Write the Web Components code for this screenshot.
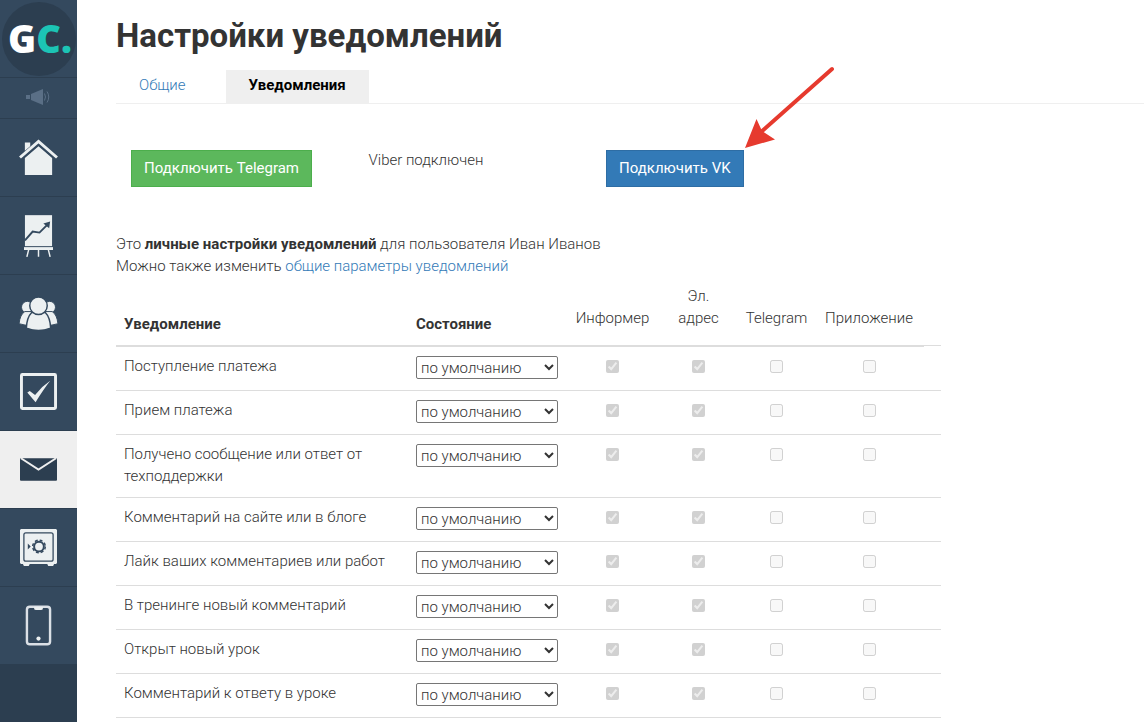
<!DOCTYPE html>
<html lang="ru">
<head>
<meta charset="utf-8">
<meta name="viewport" content="width=device-width, initial-scale=1">
<title>Настройки уведомлений</title>
<style>
  html { --line: #ddd; --link: #337ab7; --font: Roboto, "Noto Sans", sans-serif; }
  body { margin: 0; background: #fff; color: #333; font: 300 15px/22px var(--font); }
</style>
</head>
<body>
<gc-app>
  <gc-sidebar slot="sidebar"></gc-sidebar>
  <gc-page heading="Настройки уведомлений">
    <gc-tabs slot="tabs"></gc-tabs>
    <gc-connections></gc-connections>
    <gc-intro></gc-intro>
    <gc-table></gc-table>
  </gc-page>
</gc-app>

<script>
const define = (name, html, setup) => customElements.define(name, class extends HTMLElement {
  constructor() {
    super();
    const t = document.createElement('template');
    t.innerHTML = html;
    this.attachShadow({ mode: 'open' }).append(t.content.cloneNode(true));
  }
  connectedCallback() { if (setup) setup(this, this.shadowRoot); }
});

define('gc-app', `
  <style>
    :host { display: grid; grid-template-columns: 77px minmax(0, 1fr); min-height: 100vh; }
  </style>
  <slot name="sidebar"></slot><slot></slot>`);

define('gc-nav-item', `
  <style>
    :host { display: block; }
    a { display: flex; align-items: center; justify-content: center; box-sizing: border-box;
        height: 78px; background: #34495e; border-bottom: 1px solid #2c3e50; color: #ecf0f1; }
    :host([small]) a { height: 41px; padding: 0 1px 2px 0; color: #5a6f86; }
    :host([active]) a { background: #efefef; color: #2c3e50; }
  </style>
  <a href="#"><slot></slot></a>`,
  (el, root) => root.querySelector('a').setAttribute('aria-label', el.getAttribute('label')));

define('gc-sidebar', `
  <style>
    :host { display: block; background: #2c3e50; }
    svg { display: block; }
    .logo { display: flex; align-items: center; justify-content: center; box-sizing: border-box;
            width: 74px; height: 74px; padding: 0 0 2px 2px;
            border-radius: 50%; background: #2c3e50; color: #fff; text-decoration: none;
            font: 800 38px/72px "Open Sans", sans-serif; }
    .logo span { color: #1cc4b5; }
    header { display: flex; justify-content: center; align-items: center; height: 77px; padding-left: 1px;
             background: #34495e; border-bottom: 1px solid #2c3e50; }
  </style>
  <header><a class="logo" href="#">G<span>C.</span></a></header>
  <nav>
    <gc-nav-item small label="Объявления">
      <svg width="26" height="18" viewBox="0 0 26 18" fill="currentColor"><rect x="1" y="7" width="4" height="4"/><path d="M6 6 18 1v16L6 12z"/><path d="M19.500 5.500q2 3.500 0 7M22 3.500q3.500 5.500 0 11" fill="none" stroke="currentColor"/></svg>
    </gc-nav-item>
    <gc-nav-item label="Главная">
      <svg width="39" height="37" viewBox="0 0 40 38" fill="currentColor"><path d="M6 19.500 20 7.500l14 12V37H6z"/><path d="M6 3.500h5.500v4L6 12.500z"/><path d="M1 20 20 3.500 39 20" fill="none" stroke="#34495e" stroke-width="5"/><path d="M1 19 20 2.500 39 19" fill="none" stroke="currentColor" stroke-width="3"/></svg>
    </gc-nav-item>
    <gc-nav-item label="Статистика">
      <svg width="31" height="43" viewBox="0 0 32 44" fill="currentColor"><path d="M2 1h28v32H2z"/><path d="m2 27 8-9 7 1 8-8" fill="none" stroke="#34495e" stroke-width="2"/><path d="m21 9.500 7-2-1 7z" fill="#34495e"/><path d="M1 34h30v3H1z"/><path d="m6 36-2 8m12-8v8m10-8 2 8" stroke="currentColor" stroke-width="1.500"/></svg>
    </gc-nav-item>
    <gc-nav-item label="Пользователи">
      <svg width="39" height="35" viewBox="0 0 40 36" fill="currentColor" stroke="#34495e"><circle cx="8.500" cy="11.500" r="6"/><circle cx="31.500" cy="11.500" r="6"/><path d="M6 16h7v14Q6 30.500 0 28.500 1 19 6 16zM34 16h-7v14q7 .5 13-1.500Q39 19 34 16z"/><path d="M13 17h14q5 5 5.500 16Q20 38 7.500 33 8 22 13 17z" stroke-width="1.500"/><circle cx="20" cy="10" r="9" stroke-width="1.500"/></svg>
    </gc-nav-item>
    <gc-nav-item label="Задачи">
      <svg width="37" height="37" viewBox="0 0 38 38"><rect x="1.500" y="1.500" width="35" height="35" rx="1" fill="none" stroke="currentColor" stroke-width="3"/><path d="m7.500 20 2.500-1.500 5.500 4Q22 14 31 8 24 17 16 30z" fill="currentColor"/></svg>
    </gc-nav-item>
    <gc-nav-item active label="Сообщения">
      <svg width="37" height="23" viewBox="0 1 38 23"><rect y="1" width="38" height="23" rx="1" fill="currentColor"/><path d="M1 1 19 12.500 37 1" fill="none" stroke="#efefef" stroke-width="2"/></svg>
    </gc-nav-item>
    <gc-nav-item label="Продажи">
      <svg width="37" height="37" viewBox="0 0 38 38"><path d="M1 0h36l1 1v34l-1 1h-2l-1 2h-5l-1-2H10l-1 2H4l-1-2H1l-1-1V1z" fill="currentColor"/><g fill="none" stroke="#34495e"><rect x="4" y="4" width="30" height="29" rx="2" stroke-width="1.300"/><circle cx="19.500" cy="18" r="5" stroke-width="2"/><circle cx="19.500" cy="18" r="6.500" stroke-width="1.500" stroke-dasharray="3 2.100"/></g><path d="m8 15 3 3-3 3z" fill="#34495e"/></svg>
    </gc-nav-item>
    <gc-nav-item label="Мобильное приложение">
      <svg width="27" height="43" viewBox="0 0 28 43"><rect x="2" y="2" width="24" height="39" rx="3" fill="none" stroke="#dbe0e6" stroke-width="2.500"/><path d="M9.500 2h9v2q0 1.500-2 1.500h-5q-2 0-2-1.500z" fill="#ecf0f1"/><circle cx="14" cy="35" r="2.200" fill="#ecf0f1"/></svg>
    </gc-nav-item>
  </nav>`);

define('gc-page', `
  <style>
    :host { display: block; padding-left: 39px; }
    h1 { margin: 0; padding: 15px 0 13px; font-size: 33px; line-height: 42px; font-weight: 700; }
  </style>
  <h1></h1><slot name="tabs"></slot><slot></slot>`,
  (el, root) => root.querySelector('h1').textContent = el.getAttribute('heading'));

define('gc-tabs', `
  <style>
    :host { display: block; }
    nav { display: flex; gap: 17px; border-bottom: 1px solid #efefef; }
    a { padding: 4px 23px 7px; color: var(--link); text-decoration: none; }
    a[aria-current] { background: #efefef; color: #000; font-weight: 700; }
  </style>
  <nav><a href="#">Общие</a><a href="#" aria-current="page">Уведомления</a></nav>`);

define('gc-button', `
  <style>
    :host { display: inline-block; }
    button { padding: 7px 12px; border: 1px solid #4cae4c; background: #5cb85c; color: #fff;
             font: 400 15px/21px var(--font); white-space: nowrap; display: block; }
    :host([kind="primary"]) button { background: #337ab7; border-color: #2e6da4; }
  </style>
  <button type="button"><slot></slot></button>`);

define('gc-connections', `
  <style>
    :host { display: grid; grid-template-columns: repeat(4, 1fr); max-width: 950px;
            padding: 46px 0; align-items: start; line-height: 20px; }
    div { padding-left: 15px; }
    .target { position: relative; display: inline-block; vertical-align: top; padding: 0; }
    svg { position: absolute; left: 100%; bottom: 100%; }
  </style>
  <div><gc-button>Подключить Telegram</gc-button></div>
  <div>Viber подключен</div>
  <div><div class="target"><gc-button kind="primary">Подключить VK</gc-button>
    <svg width="92" height="86" viewBox="0 0 92 86" aria-hidden="true"><path d="M88 5 17 68" stroke="#e63a2e" stroke-width="4" stroke-linecap="round"/><path d="M1 84 12.500 55 18 67 31 75.500z" fill="#e63a2e"/></svg></div></div>`);

define('gc-intro', `
  <style>
    :host { display: block; }
    p { margin: 0; }
    b { font-weight: 700; }
    a { color: var(--link); text-decoration: none; }
  </style>
  <p>Это <b>личные настройки уведомлений</b> для пользователя Иван Иванов</p>
  <p>Можно также изменить <a href="#">общие параметры уведомлений</a></p>`);

define('gc-table', `
  <style>
    :host { display: block; max-width: 825px; padding-top: 8px; }
    table { width: 100%; table-layout: fixed; border-collapse: separate; border-spacing: 0; }
    .name { width: 292px; } .state { width: 159px; } .informer { width: 91px; }
    .email { width: 81px; } .telegram { width: 75px; } .app { width: 110px; }
    th, td { padding: 8px 8px 10px; vertical-align: top; text-align: left; border-bottom: 1px solid var(--line); }
    th { padding: 0 8px 10px; vertical-align: bottom; border-bottom-width: 2px; font-weight: 700; }
    th.mark { padding: 0 0 16px; font-weight: 300; text-align: center; }
    td.end-head { border-bottom-color: transparent; box-shadow: inset 0 -1px var(--line); }
    .mark { text-align: center; padding-left: 0; padding-right: 0; }
    select { display: block; width: 142px; height: 23px; margin: 1px 0; padding: 0;
             border: 1px solid #767676; border-radius: 2px; background: #fff; color: #333;
             font: 300 15px/21px var(--font); }
    input { display: block; width: 13px; height: 13px; margin: 5px auto; }
  </style>
  <table>
    <colgroup><col class="name"><col class="state"><col class="informer"><col class="email"><col class="telegram"><col class="app"><col></colgroup>
    <thead><tr><th>Уведомление</th><th>Состояние</th><th class="mark">Информер</th><th class="mark">Эл.<br>адрес</th><th class="mark">Telegram</th><th class="mark">Приложение</th><td class="end-head"></td></tr></thead>
    <tbody></tbody>
  </table>`,
  (el, root) => {
    const channels = ['Информер', 'Эл. адрес', 'Telegram', 'Приложение'];
    const names = ['Поступление платежа', 'Прием платежа', 'Получено сообщение или ответ от техподдержки',
      'Комментарий на сайте или в блоге', 'Лайк ваших комментариев или работ',
      'В тренинге новый комментарий', 'Открыт новый урок', 'Комментарий к ответу в уроке'];
    root.querySelector('tbody').innerHTML = names.map((name, i) => `
      <tr><td><label for="s${i}">${name}</label></td>
      <td><select id="s${i}"><option>по умолчанию</option></select></td>
      ${channels.map((c, j) => `<td class="mark"><input type="checkbox" disabled aria-label="${name}: ${c}"${j < 2 ? ' checked' : ''}></td>`).join('')}
      <td></td></tr>`).join('');
  });
</script>
</body>
</html>
